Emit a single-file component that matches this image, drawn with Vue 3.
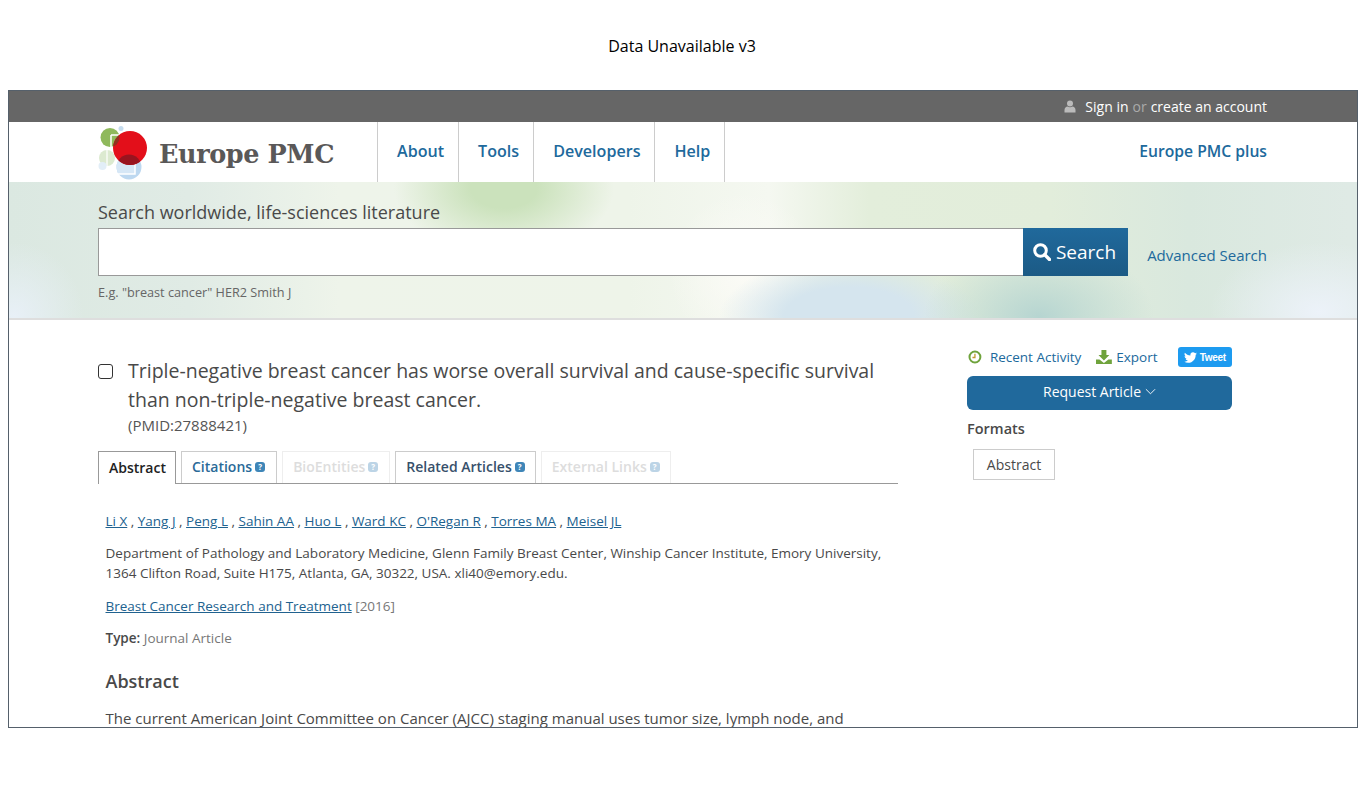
<template>
  <div class="page">
    <h1 class="page-title">Data Unavailable v3</h1>
    <div class="frame">
      <div class="topbar">
        <svg class="user-icon" viewBox="0 0 12 13" width="12" height="13">
          <circle cx="6" cy="3.4" r="3" fill="#bbb" />
          <path d="M0.5 12.5V10c0-2 1.600-3.200 3-3.400 1.400 1 3.600 1 5 0 1.400.2 3 1.400 3 3.400v2.500z" fill="#bbb" />
        </svg>
        <a class="top-link">Sign in</a>
        <span class="top-or">or</span>
        <a class="top-link">create an account</a>
      </div>

      <header class="header">
        <div class="logo">
          <svg class="logo-mark" viewBox="0 0 50 56" width="50" height="56">
            <defs>
              <clipPath id="red-disc"><circle cx="32" cy="22" r="17" /></clipPath>
              <clipPath id="blue-disc"><circle cx="31" cy="41" r="12.500" /></clipPath>
            </defs>
            <circle cx="23" cy="2.500" r="2.500" fill="#c5dcee" />
            <circle cx="12" cy="11.500" r="9.500" fill="#8fb95c" />
            <path d="M13 9h11M13 9v12" fill="none" stroke="#fff" stroke-width="1.500" />
            <circle cx="9" cy="32" r="8" fill="#dcead0" />
            <path d="M9 24v16" stroke="#fff" stroke-width="1.200" />
            <circle cx="4.500" cy="40" r="4" fill="#e2eef7" />
            <circle cx="31" cy="41" r="12.500" fill="#bdd8f0" />
            <rect x="17" y="28" width="20" height="20" fill="#d6e7f6" clip-path="url(#blue-disc)" />
            <path d="M37 28V48H17" fill="none" stroke="#fff" stroke-width="1.500" />
            <circle cx="32" cy="22" r="17" fill="#e30f1a" />
            <g clip-path="url(#red-disc)">
              <circle cx="12" cy="11.500" r="9.500" fill="#7c3a22" opacity=".8" />
              <circle cx="31" cy="41" r="12.500" fill="#98141f" />
            </g>
          </svg>
          <span class="logo-text">Europe PMC</span>
        </div>
        <nav class="nav">
          <a v-for="item in navItems" :key="item" class="nav-item">{{ item }}</a>
        </nav>
        <a class="plus-link">Europe PMC plus</a>
      </header>

      <section class="search">
        <div class="search-inner">
          <label class="search-label">Search worldwide, life-sciences literature</label>
          <div class="search-row">
            <div class="search-input"></div>
            <button class="search-btn">
              <svg viewBox="0 0 18 18" width="18" height="18">
                <circle cx="7.500" cy="7.500" r="5.800" fill="none" stroke="#fff" stroke-width="3" />
                <path d="M11.800 11.800l4.700 4.700" stroke="#fff" stroke-width="3.400" stroke-linecap="round" />
              </svg>
              Search
            </button>
            <a class="advanced">Advanced Search</a>
          </div>
          <div class="search-hint">E.g. "breast cancer" HER2 Smith J</div>
        </div>
      </section>

      <main class="content">
        <article class="article">
          <div class="title-row">
            <span class="checkbox"></span>
            <div>
              <h2 class="article-title">Triple-negative breast cancer has worse overall survival and cause-specific survival than non-triple-negative breast cancer.</h2>
              <div class="pmid">(PMID:27888421)</div>
            </div>
          </div>

          <div class="tabs">
            <div
              v-for="tab in tabs"
              :key="tab.label"
              class="tab"
              :class="{ active: tab.active, disabled: tab.disabled, dark: tab.dark }"
            >
              {{ tab.label }}
              <span v-if="!tab.active" class="help">?</span>
            </div>
          </div>

          <div class="body">
            <p class="authors">
              <template v-for="(name, i) in authors" :key="name">
                <a class="link">{{ name }}</a><span v-if="i < authors.length - 1"> , </span>
              </template>
            </p>
            <p class="affil">Department of Pathology and Laboratory Medicine, Glenn Family Breast Center, Winship Cancer Institute, Emory University, 1364 Clifton Road, Suite H175, Atlanta, GA, 30322, USA. xli40@emory.edu.</p>
            <p class="journal"><a class="link">Breast Cancer Research and Treatment</a> <span class="grey">[2016]</span></p>
            <p class="type"><b>Type:</b> <span class="grey">Journal Article</span></p>
            <h3 class="abstract-head">Abstract</h3>
            <p class="abstract-text">The current American Joint Committee on Cancer (AJCC) staging manual uses tumor size, lymph node, and</p>
          </div>
        </article>

        <aside class="side">
          <div class="actions">
            <svg class="clock" viewBox="0 0 14 14" width="14" height="14">
              <circle cx="7" cy="7" r="5.500" fill="none" stroke="#6fa33c" stroke-width="2" />
              <path d="M7 3.800V7.500H4.500" fill="none" stroke="#c29a30" stroke-width="1.300" />
            </svg>
            <a class="action recent">Recent Activity</a>
            <svg class="dl" viewBox="0 0 16 14" width="16" height="14">
              <path d="M5.500 0h5v5h3L8 10.500 2.500 5h3z" fill="#6fa33c" />
              <path d="M0 9.500h3.500L8 13l4.500-3.500H16V14H0z" fill="#6fa33c" />
            </svg>
            <a class="action export">Export</a>
            <span class="tweet">
              <svg viewBox="0 0 24 24" width="13" height="13">
                <path fill="#fff" d="M23.950 4.570a10 10 0 0 1-2.820.77 4.960 4.960 0 0 0 2.160-2.720c-.95.550-2 .96-3.130 1.190a4.920 4.920 0 0 0-8.380 4.480C7.690 8.100 4.070 6.130 1.640 3.160a4.820 4.820 0 0 0-.67 2.480c0 1.710.87 3.210 2.190 4.100a4.900 4.900 0 0 1-2.230-.62v.06a4.920 4.920 0 0 0 3.950 4.830 4.940 4.940 0 0 1-2.210.08 4.940 4.940 0 0 0 4.600 3.420A9.870 9.870 0 0 1 0 19.540a13.940 13.940 0 0 0 7.550 2.210c9.050 0 14-7.500 14-13.980 0-.21 0-.42-.02-.63a9.940 9.940 0 0 0 2.460-2.550z" />
              </svg>
              Tweet
            </span>
          </div>
          <button class="request">
            Request Article
            <svg viewBox="0 0 12 7" width="11" height="7">
              <path d="M1 1l5 5 5-5" fill="none" stroke="#fff" stroke-width="1" />
            </svg>
          </button>
          <div class="formats">Formats</div>
          <div class="format-box">Abstract</div>
        </aside>
      </main>
    </div>
  </div>
</template>

<script setup>
const navItems = ["About", "Tools", "Developers", "Help"];

const tabs = [
  { label: "Abstract", active: true },
  { label: "Citations" },
  { label: "BioEntities", disabled: true },
  { label: "Related Articles", dark: true },
  { label: "External Links", disabled: true },
];

const authors = [
  "Li X",
  "Yang J",
  "Peng L",
  "Sahin AA",
  "Huo L",
  "Ward KC",
  "O'Regan R",
  "Torres MA",
  "Meisel JL",
];
</script>

<style>
html,
body {
  margin: 0;
  background: #fff;
}
</style>

<style scoped>
.page {
  height: 806px;
  overflow: hidden;
  padding: 0 8px;
  box-sizing: border-box;
  font-family: "Open Sans", "Liberation Sans", sans-serif;
  color: #494949;
}
.page-title {
  margin: 0;
  height: 90px;
  padding-right: 2px;
  box-sizing: border-box;
  line-height: 92px;
  font-size: 16px;
  font-weight: 400;
  text-align: center;
  color: #000;
}
.frame {
  width: 1350px;
  height: 638px;
  box-sizing: border-box;
  border: 1px solid #55606b;
  overflow: hidden;
}
.topbar {
  height: 31px;
  background: #666;
  display: flex;
  align-items: center;
  justify-content: flex-end;
  padding: 0 90px 0 0;
  font-size: 14px;
  color: #aaa;
}
.user-icon {
  margin-right: 9px;
}
.top-link {
  color: #fff;
}
.top-or {
  margin: 0 4px;
}
.header {
  height: 60px;
  display: flex;
  align-items: stretch;
  padding: 0 90px 0 89px;
  background: #fff;
}
.logo {
  width: 279px;
  flex: none;
  display: flex;
  align-items: flex-start;
}
.logo-mark {
  margin-top: 4px;
  margin-right: 11px;
  flex: none;
}
.logo-text {
  margin-top: 17px;
  font-family: "DejaVu Serif", "Liberation Serif", serif;
  font-weight: 700;
  font-size: 25.500px;
  letter-spacing: -0.4px;
  white-space: nowrap;
  color: #5a5858;
}
.nav {
  display: flex;
  border-left: 1px solid #ccc;
}
.nav-item {
  display: flex;
  align-items: center;
  padding: 0 14px 2px 19px;
  border-right: 1px solid #ccc;
  font-size: 16.100px;
  font-weight: 600;
  color: #20699c;
}
.plus-link {
  margin-left: auto;
  align-self: center;
  padding-bottom: 2px;
  font-size: 15.700px;
  font-weight: 600;
  color: #20699c;
}
.search {
  height: 138px;
  overflow: hidden;
  border-bottom: 2px solid #dedede;
  box-sizing: border-box;
  background:
    radial-gradient(ellipse 110px 68px at 495px 6px, #cbe2bc 0%, #cbe2bc 30%, rgba(203, 226, 188, 0) 100%),
    radial-gradient(ellipse 115px 75px at 1030px 135px, #b6d5d1 0%, rgba(182, 213, 209, 0) 100%),
    radial-gradient(ellipse 130px 60px at 840px 135px, #d5e5ee 0%, #d5e5ee 50%, rgba(213, 229, 238, 0) 100%),
    radial-gradient(ellipse 75px 80px at 735px 90px, #fbfbf6 0%, rgba(251, 251, 246, 0) 100%),
    radial-gradient(ellipse 110px 70px at 1310px 130px, #ecf2f9 0%, rgba(236, 242, 249, 0) 100%),
    radial-gradient(ellipse 70px 75px at 5px 135px, #e8f0f7 0%, rgba(232, 240, 247, 0) 100%),
    linear-gradient(90deg, #dbe8e1 0, #e0ebe5 180px, #eef4ea 330px, #eef4e9 620px, #f5f8f1 760px, #e3eedb 860px, #e2eddb 1040px, #d9e8de 1180px, #dfeae5 1340px);
}
.search-inner {
  padding: 18px 90px 0 89px;
}
.search-label {
  display: block;
  font-size: 18px;
  line-height: 24px;
  color: #494949;
}
.search-row {
  display: flex;
  align-items: stretch;
  margin-top: 4px;
  height: 48px;
}
.search-input {
  flex: none;
  width: 925px;
  box-sizing: border-box;
  background: #fff;
  border: 1px solid #999;
  border-right: 0;
}
.search-btn {
  flex: none;
  width: 105px;
  border: 0;
  padding: 0 2px 0 0;
  display: flex;
  align-items: center;
  justify-content: center;
  gap: 5px;
  background: linear-gradient(#20699c, #1b5a85);
  color: #fff;
  font: 400 19px "Open Sans", sans-serif;
}
.advanced {
  margin-left: auto;
  align-self: center;
  padding-top: 5px;
  font-size: 15px;
  color: #20699c;
}
.search-hint {
  margin-top: 8px;
  font-size: 12.700px;
  line-height: 17px;
  color: #666;
}
.content {
  display: flex;
  padding: 0 0 0 89px;
}
.article {
  width: 800px;
  flex: none;
}
.title-row {
  display: flex;
  padding-top: 36px;
}
.checkbox {
  flex: none;
  width: 13px;
  height: 13px;
  margin: 8px 15px 0 0;
  border: 1px solid #333;
  border-radius: 3px;
}
.article-title {
  margin: 0;
  font-size: 19.500px;
  line-height: 29px;
  font-weight: 400;
  color: #494949;
}
.pmid {
  font-size: 15px;
  line-height: 20px;
  margin-top: 1px;
  color: #555;
}
.tabs {
  display: flex;
  gap: 5px;
  margin-top: 16px;
  height: 33px;
  box-sizing: border-box;
  border-bottom: 1px solid #999;
}
.tab {
  height: 32px;
  box-sizing: border-box;
  padding: 0 11px 2px 10px;
  display: flex;
  align-items: center;
  gap: 3px;
  border: 1px solid #ccc;
  border-bottom: 0;
  font-size: 14px;
  font-weight: 600;
  color: #2a6a98;
}
.tab.dark {
  padding-right: 10px;
  color: #37506b;
}
.tab.active {
  height: 33px;
  padding-right: 9px;
  border-color: #999;
  background: #fff;
  color: #222;
}
.tab.disabled {
  border-color: #eee;
  color: #ddd;
}
.tab:last-child {
  padding-right: 10px;
}
.help {
  width: 10px;
  height: 10px;
  border-radius: 3px;
  background: #3f86b8;
  color: #fff;
  font-size: 8px;
  line-height: 10px;
  font-weight: 700;
  text-align: center;
  margin-top: 1px;
}
.tab.disabled .help {
  background: #bcd4e6;
}
.body {
  padding: 0 7.500px;
  font-size: 13.500px;
}
.body p {
  margin: 0;
}
.authors {
  padding-top: 27px;
  line-height: 20px;
}
.link {
  color: #21628f;
  text-decoration: underline;
}
.affil {
  padding-top: 12px;
  line-height: 20px;
}
.journal {
  padding-top: 13px;
  line-height: 20px;
}
.type {
  padding-top: 12px;
  line-height: 20px;
}
.type b {
  font-weight: 600;
}
.grey {
  color: #777;
}
.abstract-head {
  margin: 21px 0 0;
  font-size: 18px;
  line-height: 24px;
  font-weight: 600;
}
.abstract-text {
  padding-top: 12px;
  font-size: 15px;
  line-height: 26px;
  white-space: nowrap;
}
.side {
  margin-left: 69px;
  width: 265px;
  flex: none;
  padding-top: 27px;
}
.actions {
  display: flex;
  align-items: center;
  height: 20px;
  font-size: 13.500px;
  white-space: nowrap;
}
.clock {
  margin-left: 1px;
}
.action {
  color: #20699c;
}
.recent {
  margin-left: 8px;
}
.dl {
  margin-left: 15px;
}
.export {
  margin-left: 4px;
}
.tweet {
  margin-left: 20px;
  width: 55px;
  height: 20px;
  border-radius: 3px;
  background: #1d9bf0;
  color: #fff;
  font: 700 10px "Liberation Sans", sans-serif;
  letter-spacing: -0.3px;
  display: flex;
  align-items: center;
  justify-content: center;
  gap: 3px;
}
.request {
  display: flex;
  align-items: center;
  justify-content: center;
  gap: 4px;
  margin-top: 9px;
  width: 265px;
  height: 34px;
  padding: 0 0 3px;
  border: 0;
  border-radius: 6px;
  background: #20699c;
  color: #fff;
  font: 400 14px "Open Sans", sans-serif;
}
.formats {
  margin-top: 9px;
  font-size: 14.500px;
  font-weight: 600;
  line-height: 20px;
}
.format-box {
  margin: 10px 0 0 6px;
  width: 82px;
  height: 31px;
  box-sizing: border-box;
  border: 1px solid #ccc;
  display: flex;
  align-items: center;
  justify-content: center;
  font-size: 14px;
}
</style>
